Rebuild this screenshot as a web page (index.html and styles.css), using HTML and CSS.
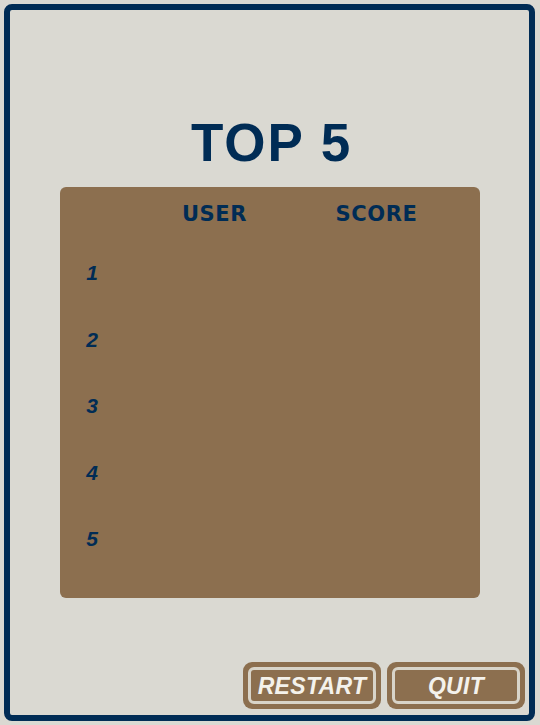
FILE: index.html
```html
<!DOCTYPE html>
<html lang="en">
<head>
<meta charset="utf-8">
<title>Top 5</title>
<link rel="stylesheet" href="styles.css">
</head>
<body>
<div class="frame">
  <h1 class="title">TOP 5</h1>
  <div class="board">
    <div class="row head">
      <span class="rank"></span>
      <span class="col">USER</span>
      <span class="col">SCORE</span>
    </div>
    <div class="row"><span class="rank">1</span><span class="col"></span><span class="col"></span></div>
    <div class="row"><span class="rank">2</span><span class="col"></span><span class="col"></span></div>
    <div class="row"><span class="rank">3</span><span class="col"></span><span class="col"></span></div>
    <div class="row"><span class="rank">4</span><span class="col"></span><span class="col"></span></div>
    <div class="row"><span class="rank">5</span><span class="col"></span><span class="col"></span></div>
  </div>
  <div class="actions">
    <button class="btn"><span class="btn-inner">RESTART</span></button>
    <button class="btn"><span class="btn-inner">QUIT</span></button>
  </div>
</div>
</body>
</html>
```

FILE: styles.css
```css
html, body {
  margin: 0;
  padding: 0;
  background: #dad9d2;
}
body {
  width: 540px;
  height: 725px;
  overflow: hidden;
}
.frame {
  box-sizing: border-box;
  margin: 4px;
  width: 531px;
  height: 717px;
  border: 6px solid #002c55;
  border-radius: 8px;
  background: #dad9d2;
  display: flex;
  flex-direction: column;
  align-items: center;
  padding-top: 106px;
}
.title {
  margin: 0 0 18px 0;
  height: 53px;
  font-family: "Liberation Sans", Arial, sans-serif;
  font-weight: 700;
  font-size: 53px;
  line-height: 53px;
  letter-spacing: 2px;
  color: #002c55;
  padding-left: 4px;
}
.board {
  box-sizing: border-box;
  width: 420px;
  height: 411px;
  background: #8c6f4f;
  border-radius: 6px;
  padding-right: 32px;
}
.row {
  display: grid;
  grid-template-columns: 64px 182px 142px;
  align-items: center;
  height: 66.5px;
}
.row.head {
  height: 53px;
}
.rank {
  text-align: center;
  font-family: "Liberation Sans", Arial, sans-serif;
  font-weight: 700;
  font-style: italic;
  font-size: 21px;
  color: #002c55;
  padding-left: 1px;
}
.col {
  text-align: center;
  font-family: "DejaVu Sans", Verdana, sans-serif;
  font-weight: 700;
  font-size: 21px;
  letter-spacing: 0.6px;
  color: #002c55;
}
.actions {
  margin-top: auto;
  align-self: stretch;
  display: flex;
  justify-content: flex-end;
  gap: 6px;
  padding: 0 4px 6px 0;
}
.btn {
  box-sizing: border-box;
  width: 138px;
  height: 47px;
  padding: 5px;
  margin: 0;
  border: none;
  border-radius: 9px;
  background: #8c6f4f;
  display: flex;
}
.btn-inner {
  box-sizing: border-box;
  flex: 1;
  border: 3px solid #d8d4c9;
  border-radius: 6px;
  background: #8c6f4f;
  display: flex;
  align-items: center;
  justify-content: center;
  padding-top: 2px;
  font-family: "Liberation Sans", Arial, sans-serif;
  font-weight: 700;
  font-style: italic;
  font-size: 23px;
  color: #f4f2ec;
  letter-spacing: 0.3px;
}
```
